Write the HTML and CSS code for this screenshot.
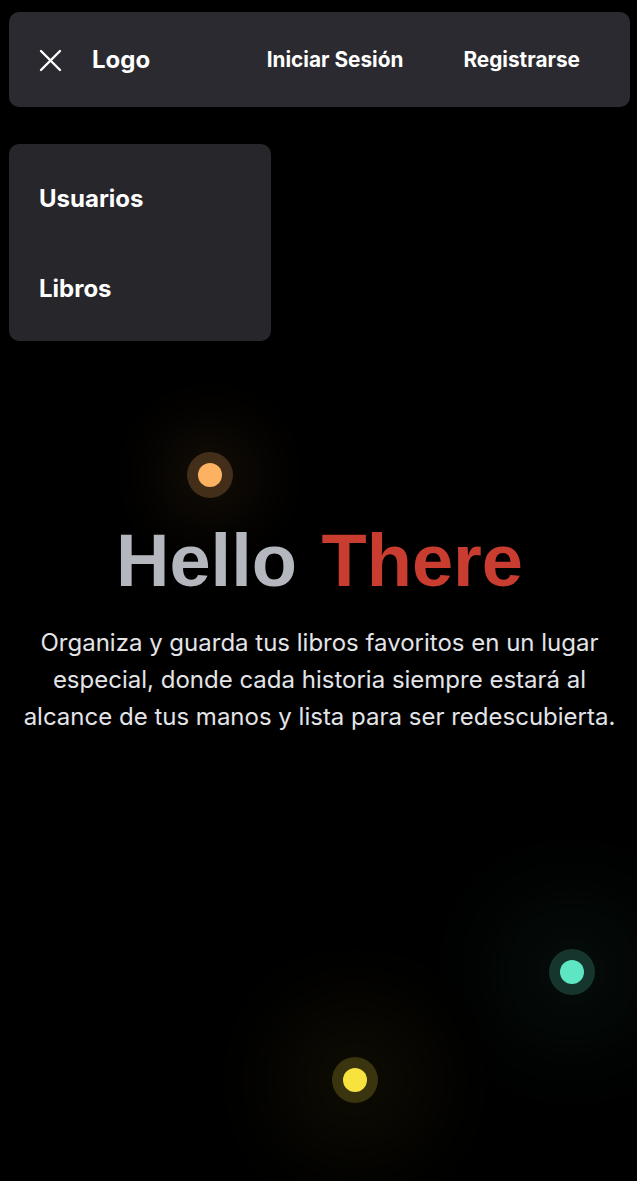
FILE: index.html
```html
<!DOCTYPE html>
<html lang="es">
<head>
<meta charset="utf-8">
<title>Hello There</title>
<link rel="stylesheet" href="styles.css">
</head>
<body>
<div class="page">
  <header class="nav">
    <div class="nav-left">
      <button class="close" aria-label="Cerrar menú">
        <svg width="24" height="24" viewBox="0 0 24 24" fill="none" stroke="#fff" stroke-width="2.4" stroke-linecap="round"><path d="M3 3L22 22M22 3L3 22"/></svg>
      </button>
      <span class="logo">Logo</span>
    </div>
    <div class="nav-right">
      <a class="nav-link">Iniciar Sesión</a>
      <a class="nav-link">Registrarse</a>
    </div>
  </header>
  <nav class="menu">
    <a class="menu-item">Usuarios</a>
    <a class="menu-item">Libros</a>
  </nav>
  <section class="hero">
    <h1 class="title"><span class="gray">Hello</span> <span class="red">There</span></h1>
    <p class="lead">Organiza y guarda tus libros favoritos en un lugar especial, donde cada historia siempre estará al alcance de tus manos y lista para ser redescubierta.</p>
  </section>
  <span class="dot orange" style="left:210px;top:475px"></span>
  <span class="dot teal" style="left:572px;top:972px"></span>
  <span class="dot yellow" style="left:355px;top:1080px"></span>
</div>
</body>
</html>
```
FILE: styles.css
```css
* { box-sizing: border-box; }
html, body { margin: 0; padding: 0; background: #000; }
body { font-family: Inter, "Noto Sans", sans-serif; color: #fff; }
.page { position: relative; min-height: 1181px; overflow: hidden; padding: 12px 7px 0 9px; }
.nav {
  height: 95px;
  background: #2b2a30;
  border-radius: 10px;
  display: flex;
  align-items: center;
  justify-content: space-between;
  padding: 0 50px 0 29px;
}
.nav-left { display: flex; align-items: center; gap: 30px; }
.close { background: none; border: 0; padding: 0; width: 24px; height: 24px; display: flex; }
.logo { font-size: 24px; font-weight: 700; }
.nav-right { display: flex; gap: 60px; align-items: center; }
.nav-link { font-size: 20.8px; font-weight: 700; color: #fff; }
.menu {
  margin-top: 37px;
  width: 262px;
  height: 197px;
  background: #27262b;
  border-radius: 10px;
  display: flex;
  flex-direction: column;
  padding: 43px 30px 0;
  gap: 66px;
}
.menu-item { font-size: 24px; font-weight: 700; color: #fff; line-height: 24px; }
.hero { text-align: center; margin-top: 176px; position: relative; z-index: 2; }
.title {
  margin: 0;
  font-family: "Liberation Sans", Arial, sans-serif;
  font-weight: 700;
  font-size: 74px;
  line-height: 88px;
}
.gray { color: #b4b7bd; }
.red { color: #c93c30; margin-left: 4px; }
.lead {
  margin: 19px auto 0;
  font-size: 24px;
  line-height: 37px;
  color: #e3e4e8;
  width: 606px;
  padding: 0;
}
.dot {
  position: absolute;
  width: 24px;
  height: 24px;
  margin: -12px 0 0 -12px;
  border-radius: 50%;
  z-index: 1;
}
.orange { background: #fdb262; box-shadow: 0 0 0 11px rgba(253,178,98,0.22), 0 0 60px 40px rgba(253,178,98,0.07); }
.teal { background: #5ee6c2; box-shadow: 0 0 0 11px rgba(94,230,194,0.2), 0 0 90px 60px rgba(94,230,194,0.06); }
.yellow { background: #f8e23e; box-shadow: 0 0 0 11px rgba(248,226,62,0.2), 0 0 90px 60px rgba(248,226,62,0.06); }
```
